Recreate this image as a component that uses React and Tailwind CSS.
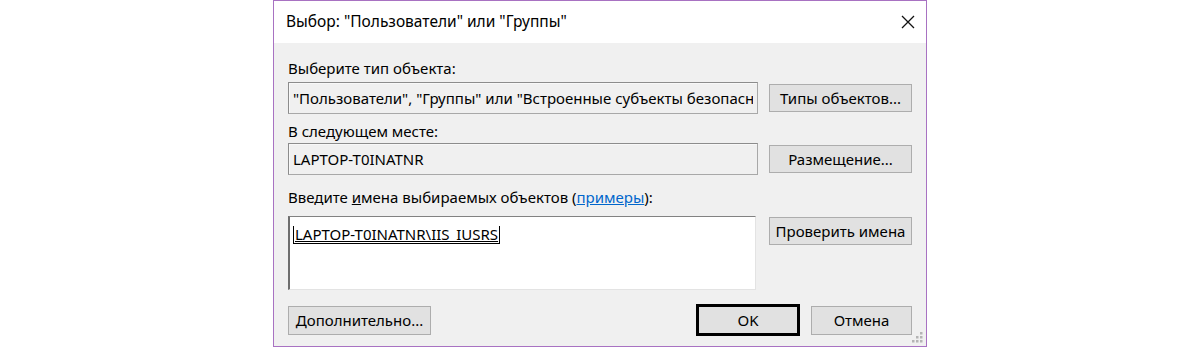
const font = { fontFamily: '"Noto Sans", "Open Sans", sans-serif' };

const Btn = ({ children, className = "" }) => (
  <button
    className={`h-[28px] bg-[#e1e1e1] border border-[#adadad] text-[15px] text-black leading-none ${className}`}
  >
    {children}
  </button>
);

const ReadField = ({ value }) => (
  <div className="h-[32px] w-[470px] bg-[#f0f0f0] border border-t-[#8c8c8c] border-l-[#8c8c8c] border-r-[#a8a8a8] border-b-[#a8a8a8] shadow-[inset_1px_1px_0_#f8f8f8] flex items-center px-[4px] overflow-hidden whitespace-nowrap text-[15px] text-black">
    <span className="block max-w-full overflow-hidden">{value}</span>
  </div>
);

const Grip = () => (
  <svg width="11" height="11" viewBox="0 0 11 11" className="absolute right-[3px] bottom-[3px]">
    {[
      [8, 0],
      [4, 4],
      [8, 4],
      [0, 8],
      [4, 8],
      [8, 8],
    ].map(([x, y]) => (
      <rect key={`${x}-${y}`} x={x} y={y} width="2.5" height="2.5" fill="#b4b4b4" />
    ))}
  </svg>
);

export default function App() {
  return (
    <div className="w-[1200px] h-[348px] bg-white flex justify-center" style={font}>
      <div className="relative w-[654px] h-[347px] border border-[#a872c2] flex flex-col">
        {/* title bar */}
        <div className="h-[42px] bg-white flex items-center justify-between pl-[12px] pr-[10px] shrink-0">
          <span className="text-[15.5px] text-black">Выбор: "Пользователи" или "Группы"</span>
          <svg width="14" height="14" viewBox="0 0 14 14" className="mr-[1px]">
            <path d="M1 1 L13 13 M13 1 L1 13" stroke="#111" strokeWidth="1.3" />
          </svg>
        </div>

        {/* body */}
        <div className="flex-1 bg-[#f0f0f0] pl-[14px] pr-[14px] pt-[15px] text-black">
          <div className="text-[15px] leading-[20px]">Выберите тип объекта:</div>
          <div className="mt-[4px] flex items-center justify-between">
            <ReadField value={'"Пользователи", "Группы" или "Встроенные субъекты безопасно'} />
            <Btn className="w-[143px]">Типы объектов...</Btn>
          </div>

          <div className="mt-[7px] text-[15px] leading-[20px]">В следующем месте:</div>
          <div className="mt-[2px] flex items-center justify-between">
            <ReadField value="LAPTOP-T0INATNR" />
            <Btn className="w-[143px]">Размещение...</Btn>
          </div>

          <div className="mt-[12px] text-[15px] leading-[20px]">
            Введите <span className="underline">и</span>мена выбираемых объектов (
            <span className="text-[#0066cc] underline">примеры</span>):
          </div>
          <div className="mt-[9px] flex items-start justify-between">
            <div className="h-[74px] w-[468px] bg-white border-t border-l-2 border-t-[#828282] border-l-[#6e6e6e] border-r border-b border-r-[#e3e3e3] border-b-[#e3e3e3] pl-[3px] pt-[5px]">
              <span className="inline-block text-[15px] leading-[17px] border-l border-r border-b border-black pl-[1px] pr-[1px] underline decoration-black">
                LAPTOP-T0INATNR\IIS_IUSRS
              </span>
            </div>
            <Btn className="w-[143px] mt-[1px] h-[27px]">Проверить имена</Btn>
          </div>

          <div className="mt-[14px] flex items-center">
            <Btn className="w-[143px] h-[29px]">Дополнительно...</Btn>
            <div className="flex-1" />
            <button className="w-[104px] h-[32px] bg-[#e1e1e1] border-[3px] border-black text-[15px] leading-none">
              OK
            </button>
            <Btn className="w-[101px] h-[29px] ml-[11px]">Отмена</Btn>
          </div>
        </div>
        <Grip />
      </div>
    </div>
  );
}
